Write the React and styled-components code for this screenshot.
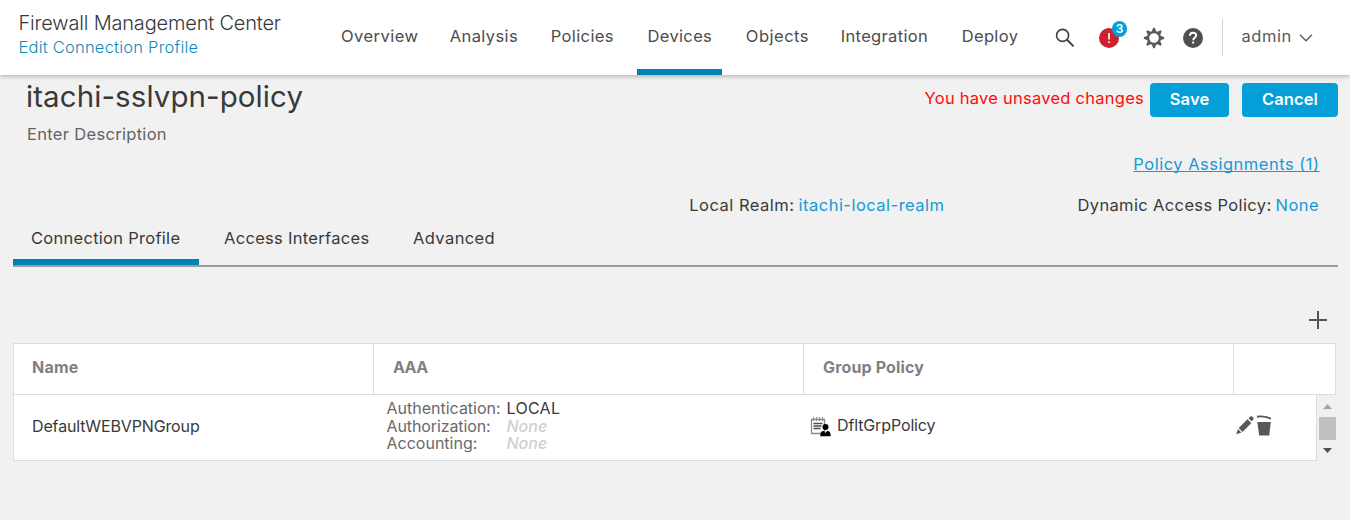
import React from "react";
import styled, { createGlobalStyle, css } from "styled-components";

const GlobalStyle = createGlobalStyle`
  *, *::before, *::after { box-sizing: border-box; }
  body {
    margin: 0;
    min-height: 520px;
    background: #f1f1f1;
    color: #39393b;
    font: 400 16.5px/20px Inter, "Liberation Sans", sans-serif;
    overflow: hidden;
  }
`;

const text = css`
  white-space: nowrap;
  letter-spacing: ${(p) => p.$track ?? 0}px;
`;

const Header = styled.header`
  position: relative;
  display: flex;
  height: 75px;
  background: #fff;
  box-shadow: 0 1px 5px rgba(0, 0, 0, 0.3);
`;

const Brand = styled.div`
  flex: 0 0 331px;
  padding: 11px 0 0 18.5px;
`;

const ProductName = styled.div`
  ${text}
  font-size: 20px;
  line-height: 24px;
  font-weight: 300;
  color: #39393b;
`;

const PageName = styled.div`
  ${text}
  margin-top: 2px;
  font-weight: 300;
  color: #0d8abc;
`;

const Nav = styled.nav`
  display: flex;
  flex: 0 0 698px;
`;

const NavItem = styled.a`
  ${text}
  display: flex;
  flex-direction: column;
  justify-content: space-between;
  width: ${(p) => p.$width}px;
  padding-top: 26px;
  color: #4c4c4e;

  span { padding-left: ${(p) => p.$inset}px; }

  &::after {
    content: "";
    width: 85px;
    height: 6px;
    background: ${(p) => (p.$active ? "#0082b4" : "transparent")};
  }
`;

const Tools = styled.div`
  display: flex;
  align-items: flex-start;
  flex: 1;
  padding-top: 19px;
`;

const ToolIcon = styled.svg`
  flex: none;
  display: block;
  width: ${(p) => p.$w}px;
  height: ${(p) => p.$h}px;
  margin: ${(p) => p.$margin};
`;

const Alert = styled.div`
  position: relative;
  width: 20px;
  height: 20px;
  margin: 9px 0 0 24px;

  svg { display: block; }
`;

const AlertCount = styled.span`
  position: absolute;
  left: 13px;
  top: -7px;
  width: 15px;
  height: 16px;
  border-radius: 50%;
  background: #049fd9;
  color: #fff;
  font-size: 12px;
  font-weight: 600;
  line-height: 15px;
  text-align: center;
`;

const Divider = styled.div`
  width: 1px;
  height: 37px;
  margin-left: 19px;
  background: #d4d4d6;
`;

const User = styled.div`
  ${text}
  display: flex;
  margin: 7px 0 0 18.5px;
  color: #58585b;
`;

const Main = styled.main`
  padding: 4px 12px 0 13px;
`;

const TitleRow = styled.div`
  display: flex;
  justify-content: space-between;
  height: 75px;
`;

const Title = styled.h1`
  ${text}
  margin: 0 0 11px 13px;
  font-size: 29.5px;
  line-height: 34px;
  font-weight: 380;
`;

const Description = styled.div`
  ${text}
  margin-left: 14px;
  color: #636366;
`;

const Actions = styled.div`
  display: flex;
  align-items: flex-start;
  padding-top: 4px;
`;

const Unsaved = styled.span`
  ${text}
  padding: 5px 6px 0 0;
  color: #fb0d0d;
`;

const Button = styled.button`
  ${text}
  width: ${(p) => p.$width}px;
  height: 34px;
  margin-left: ${(p) => p.$gap ?? 0}px;
  padding: 0 0 2px;
  border: 0;
  border-radius: 4px;
  background: #049fd9;
  color: #fff;
  font-family: inherit;
  font-size: 16.5px;
  font-weight: 600;
`;

const AssignmentRow = styled.div`
  display: flex;
  justify-content: flex-end;
  padding-right: 18.5px;
`;

const Link = styled.a`
  ${text}
  color: #149ad6;
  text-decoration: ${(p) => (p.$underline ? "underline" : "none")};
  text-decoration-thickness: 1px;
  text-underline-offset: 1px;
  text-decoration-skip-ink: none;
`;

const SettingsRow = styled.div`
  display: flex;
  justify-content: flex-end;
  gap: 133px;
  padding: 21px 19px 0 0;
`;

const Setting = styled.div`
  display: flex;
  gap: 4px;
`;

const Label = styled.span`
  ${text}
`;

const Tabs = styled.div`
  display: flex;
  height: 52px;
  border-bottom: 2px solid #9c9ca0;
`;

const Tab = styled.div`
  ${text}
  width: ${(p) => p.$width}px;
  padding: 13px 0 0 ${(p) => p.$inset}px;
  border-bottom: 6px solid ${(p) => (p.$active ? "#0082b4" : "transparent")};
`;

const AddRow = styled.div`
  display: flex;
  justify-content: flex-end;
  align-items: flex-end;
  height: 76px;
  padding: 0 11px 14px 0;

  svg { display: block; }
`;

const Table = styled.section`
  width: 1323px;
  font-size: 16px;
`;

const columns = "360px 430px 430px 1fr";

const HeadRow = styled.div`
  display: grid;
  grid-template-columns: ${columns};
  height: 52px;
  border: 1px solid #dcdcde;
  background: #fff;
`;

const HeadCell = styled.div`
  ${text}
  padding: 13px 0 0 18px;
  border-right: 1px solid #dcdcde;
  color: #7f7f86;
  font-weight: 650;

  & + & { padding-left: 19px; }
  &:last-child { border-right: 0; }
`;

const Body = styled.div`
  display: flex;
  height: 66px;
`;

const Row = styled.div`
  display: grid;
  grid-template-columns: ${columns};
  width: 1304px;
  border: 1px solid #dcdcde;
  border-top: 0;
  background: #fff;
`;

const NameCell = styled.div`
  ${text}
  padding: 21px 0 0 18px;
`;

const AaaList = styled.dl`
  display: grid;
  grid-template-columns: 120px 1fr;
  grid-auto-rows: 17.5px;
  align-content: start;
  margin: 0;
  padding: 4px 0 0 12.5px;
  line-height: 18px;
`;

const AaaTerm = styled.dt`
  ${text}
  color: #69696c;
`;

const AaaValue = styled.dd`
  ${text}
  margin: 0;
  font-style: ${(p) => (p.$empty ? "italic" : "normal")};
  font-weight: ${(p) => (p.$empty ? 500 : 400)};
  color: ${(p) => (p.$empty ? "#cfcfd1" : "#39393b")};
`;

const PolicyCell = styled.div`
  ${text}
  display: flex;
  align-items: flex-start;
  padding: 20px 0 0 6px;

  svg { flex: none; margin: 1px 6px 0 0; }
`;

const ActionCell = styled.div`
  display: flex;
  padding: 20px 0 0 2px;

  svg { flex: none; }
`;

const Scrollbar = styled.div`
  display: flex;
  flex-direction: column;
  align-items: center;
  width: 17px;
  height: 65px;
  margin-left: 2px;
  background: #f0f0f0;
`;

const Arrow = styled.svg`
  display: block;
  width: 9px;
  height: 5px;
  margin: ${(p) => p.$margin};
`;

const Thumb = styled.div`
  width: 17px;
  height: 23px;
  background: #c0c0c0;
`;

const navItems = [
  ["Overview", 108.5, 10, 0.45],
  ["Analysis", 100.5, 10.3, 0.38],
  ["Policies", 97, 10.7, 0.4],
  ["Devices", 98, 10.5, 0.35],
  ["Objects", 95, 10.8, 0.5],
  ["Integration", 121, 10.8, 0.32],
  ["Deploy", 78, 10.7, 0.35],
];

const gearTeeth = [0, 45, 90, 135, 180, 225, 270, 315];

export default function App() {
  return (
    <>
      <GlobalStyle />
      <Header>
        <Brand>
          <ProductName $track={-0.18}>Firewall Management Center</ProductName>
          <PageName $track={0.22}>Edit Connection Profile</PageName>
        </Brand>
        <Nav>
          {navItems.map(([label, width, inset, track]) => (
            <NavItem key={label} $width={width} $inset={inset} $track={track} $active={label === "Devices"}>
              <span>{label}</span>
            </NavItem>
          ))}
        </Nav>
        <Tools>
          <ToolIcon $w={20} $h={20} $margin="9px 0 0 26px" viewBox="0 0 20 20" fill="none" stroke="#414144">
            <circle cx="7.6" cy="7.4" r="6" strokeWidth="1.6" />
            <path d="M12 11.8 18.6 18.4" strokeWidth="2" />
          </ToolIcon>
          <Alert>
            <svg width="20" height="20" viewBox="0 0 20 20">
              <circle cx="10" cy="10" r="10" fill="#cf2030" />
              <path d="M10 5v6.6M10 13.2v1.8" stroke="#fff" strokeWidth="1.6" />
            </svg>
            <AlertCount>3</AlertCount>
          </Alert>
          <ToolIcon $w={22} $h={22} $margin="8px 0 0 24px" viewBox="-11 -11 22 22">
            <circle r="5.9" fill="none" stroke="#58585b" strokeWidth="2.2" />
            {gearTeeth.map((a) => (
              <path key={a} d="M-2.4-6.2-.7-10.2H.7L2.4-6.2Z" fill="#58585b" transform={`rotate(${a})`} />
            ))}
          </ToolIcon>
          <ToolIcon $w={20} $h={20} $margin="9px 0 0 18px" viewBox="0 0 20 20">
            <circle cx="10" cy="10" r="10" fill="#4f4f52" />
            <path d="M6.9 7.8C7 5.9 8.2 4.8 10 4.8s3.1 1.1 3.1 2.7c0 2.2-2.9 2.3-2.9 4.7" fill="none" stroke="#fff" strokeWidth="2" />
            <rect x="9.2" y="13.6" width="2" height="2" fill="#fff" />
          </ToolIcon>
          <Divider />
          <User $track={0.55}>
            admin
            <ToolIcon $w={14} $h={8} $margin="8px 0 0 7px" viewBox="0 0 14 8" fill="none" stroke="#58585b" strokeWidth="1.3">
              <path d="M1 .8 7 6.8 13 .8" />
            </ToolIcon>
          </User>
        </Tools>
      </Header>
      <Main>
        <TitleRow>
          <div>
            <Title $track={0.08}>itachi-sslvpn-policy</Title>
            <Description $track={0.31}>Enter Description</Description>
          </div>
          <Actions>
            <Unsaved $track={0.25}>You have unsaved changes</Unsaved>
            <Button $width={79} $track={0.15}>Save</Button>
            <Button $width={96} $gap={13} $track={0.1}>Cancel</Button>
          </Actions>
        </TitleRow>
        <AssignmentRow>
          <Link $underline $track={0.5}>Policy Assignments (1)</Link>
        </AssignmentRow>
        <SettingsRow>
          <Setting>
            <Label $track={0.5}>Local Realm:</Label>
            <Link $track={0.48}>itachi-local-realm</Link>
          </Setting>
          <Setting>
            <Label $track={0.36}>Dynamic Access Policy:</Label>
            <Link $track={0.45}>None</Link>
          </Setting>
        </SettingsRow>
        <Tabs>
          <Tab $active $width={186} $inset={18} $track={0.28}>Connection Profile</Tab>
          <Tab $width={196} $inset={25} $track={0.3}>Access Interfaces</Tab>
          <Tab $width={130} $inset={18} $track={0.4}>Advanced</Tab>
        </Tabs>
        <AddRow>
          <svg width="18" height="18" viewBox="0 0 18 18">
            <path d="M9 0v18M0 9h18" stroke="#555558" strokeWidth="2" />
          </svg>
        </AddRow>
        <Table>
          <HeadRow>
            <HeadCell $track={0.2}>Name</HeadCell>
            <HeadCell $track={-0.6}>AAA</HeadCell>
            <HeadCell $track={0.15}>Group Policy</HeadCell>
            <HeadCell />
          </HeadRow>
          <Body>
            <Row>
              <NameCell $track={-0.13}>DefaultWEBVPNGroup</NameCell>
              <AaaList>
                <AaaTerm>Authentication:</AaaTerm>
                <AaaValue $track={0.3}>LOCAL</AaaValue>
                <AaaTerm $track={-0.1}>Authorization:</AaaTerm>
                <AaaValue $empty>None</AaaValue>
                <AaaTerm>Accounting:</AaaTerm>
                <AaaValue $empty>None</AaaValue>
              </AaaList>
              <PolicyCell $track={-0.13}>
                <svg width="21" height="21" viewBox="0 0 21 21">
                  <path d="M1.5 3.5h13v14h-13z" fill="#fff" stroke="#8a8a8d" strokeWidth="1.3" />
                  <path d="M3.5 1v4M6.5 1v4M9.5 1v4M12.5 1v4" stroke="#8a8a8d" strokeWidth="1.2" />
                  <path d="M3.5 7.5h9M3.5 10h8M3.5 12.5h7" stroke="#4b4b4e" strokeWidth="1.3" />
                  <circle cx="15.5" cy="11" r="3" fill="#000" />
                  <path d="M10.3 20.3c0-4 1.2-5.2 3.6-5.5L15.5 17l1.6-2.2c2.4.3 3.6 1.5 3.6 5.5Z" fill="#000" />
                </svg>
                DfltGrpPolicy
              </PolicyCell>
              <ActionCell>
                <svg width="20" height="20" viewBox="0 0 20 20" fill="#58585b">
                  <path d="M.3 19.2 1.9 14l3.6 3.6ZM2.7 13 11.5 4.2l3.9 3.9-8.8 8.8ZM12.5 3.2l1.3-1.3c1-1 2.3-.8 3.1.1s1 2 .1 3l-1.4 1.3Z" />
                </svg>
                <svg width="16" height="21" viewBox="0 0 16 21" fill="#58585b">
                  <path d="M1.3 7H14.8L13.2 20.5H3.2Z" />
                  <path d="M1 1.7C6 .8 10.5 1.8 14.9 3.6" fill="none" stroke="#58585b" strokeWidth="1.9" />
                </svg>
              </ActionCell>
            </Row>
            <Scrollbar>
              <Arrow $margin="9px 0 8px" viewBox="0 0 9 5"><path d="M4.5 0 9 5H0Z" fill="#a3a3a3" /></Arrow>
              <Thumb />
              <Arrow $margin="8px 0 0" viewBox="0 0 9 5"><path d="M0 0H9L4.5 5Z" fill="#505050" /></Arrow>
            </Scrollbar>
          </Body>
        </Table>
      </Main>
    </>
  );
}
